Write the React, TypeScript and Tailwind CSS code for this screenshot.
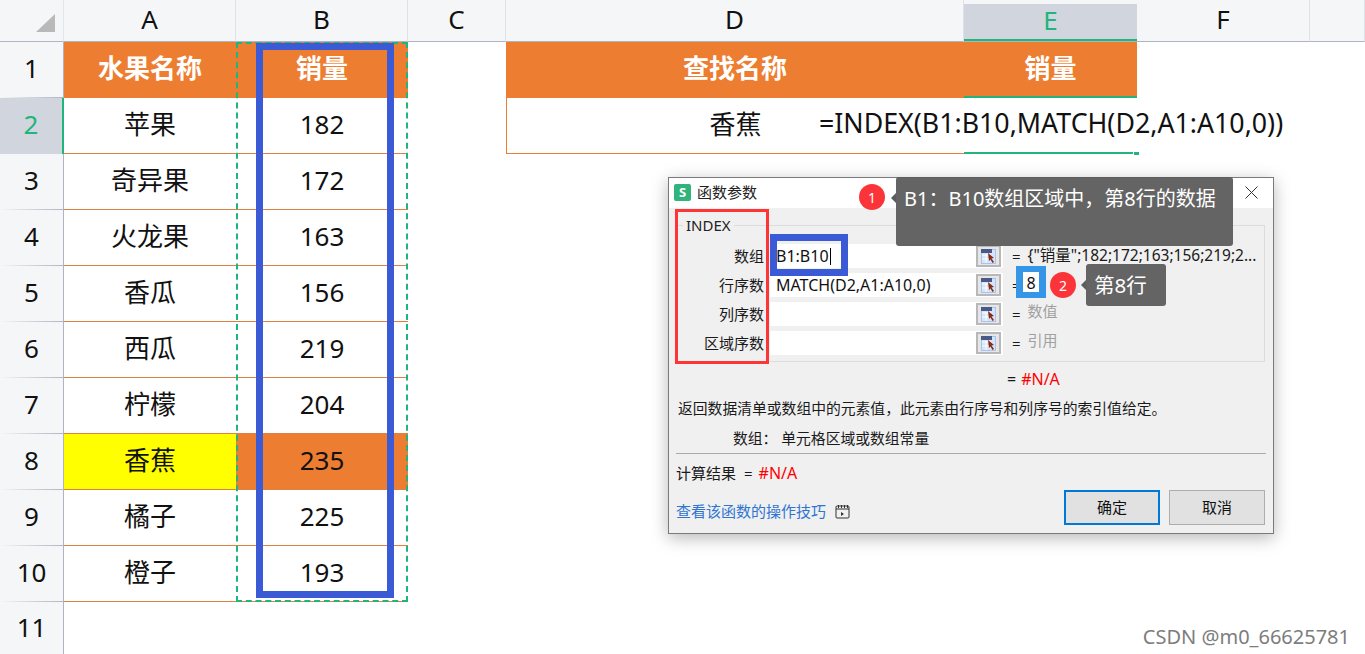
import type { ReactNode } from "react";

const fontStack = '"Noto Sans", "Noto Sans CJK SC", sans-serif';
const columns = ["A", "B", "C", "D", "E", "F", ""];

const fruits: [string, string][] = [
  ["苹果", "182"],
  ["奇异果", "172"],
  ["火龙果", "163"],
  ["香瓜", "156"],
  ["西瓜", "219"],
  ["柠檬", "204"],
  ["香蕉", "235"],
  ["橘子", "225"],
  ["橙子", "193"],
];

function RangeIcon() {
  return (
    <div className="flex h-[22px] w-[25px] shrink-0 items-center justify-center border-2 border-[#b8b8b8] bg-[#e6e6e6]">
      <svg width="15" height="15" viewBox="0 0 15 15">
        <rect x="0.5" y="0.5" width="14" height="14" fill="#d4e4fa" stroke="#a8c4ee" />
        <rect x="0" y="0" width="11" height="4" fill="#4a5a88" />
        <path d="M1 6h9M1 10h9M5 5v9" stroke="#fff" />
        <path d="M7 4l6 5-2.500.5L13 13l-1.500 1-2-3.500L8 12z" fill="#8a2a12" />
      </svg>
    </div>
  );
}

function ArgRow({ label, value, result }: { label: string; value?: ReactNode; result: ReactNode }) {
  return (
    <div className="flex h-[29px] items-start">
      <div className="h-[24px] w-[92px] shrink-0 pr-[6px] text-right text-[15px] leading-[24px] text-[#1a1a1a]">{label}</div>
      <div className="flex h-[24px] w-[233px] shrink-0 items-center justify-between bg-white pr-[2px] pl-[6px] text-[16px] whitespace-nowrap text-[#111]">
        <span className="flex items-center">{value}</span>
        <RangeIcon />
      </div>
      <div className="flex h-[24px] items-center gap-[7px] pl-[9px] text-[15px] whitespace-nowrap text-[#1a1a1a]">
        <span>=</span>
        {result}
      </div>
    </div>
  );
}

function Bubble({ n }: { n: number }) {
  return (
    <div className="flex h-[26px] w-[26px] items-center justify-center rounded-full bg-[#fb3439] text-[14px] text-white">{n}</div>
  );
}

function FunctionDialog() {
  return (
    <div className="absolute top-[177px] left-[668px] h-[357px] w-[606px] border border-[#7a7a7a] bg-[#f0f0f0] shadow-[0_4px_16px_rgba(0,0,0,0.28)]">
      <div className="flex h-[30px] items-center justify-between bg-white pr-[14px] pb-[2px] pl-[5px]">
        <div className="flex items-center gap-[6px]">
          <div className="flex h-[17px] w-[17px] items-center justify-center rounded-[2px] bg-[#2fb57c] text-[13px] leading-none font-bold text-white">S</div>
          <span className="text-[15px] text-[#222]">函数参数</span>
        </div>
        <svg width="15" height="15" viewBox="0 0 15 15">
          <path d="M1.500 1.500l12 12M13.500 1.500l-12 12" stroke="#333" strokeWidth="1" />
        </svg>
      </div>

      <div className="relative mx-[8px] mt-[17px] h-[137px] border border-[#dcdcdc] pt-[18px]">
        <div className="absolute -top-[10px] left-[5px] bg-[#f0f0f0] px-[3px] text-[15px] leading-[18px] text-[#222]">INDEX</div>
        <ArgRow
          label="数组"
          value={
            <>
              B1:B10
              <span className="ml-[1px] inline-block h-[17px] w-[1px] bg-black" />
            </>
          }
          result={<span className="text-[15.500px]">{'{"销量";182;172;163;156;219;2...'}</span>}
        />
        <ArgRow label="行序数" value="MATCH(D2,A1:A10,0)" result={<span className="w-[30px]" />} />
        <ArgRow label="列序数" result={<span className="-mt-[5px] text-[#a0a0a0]">数值</span>} />
        <ArgRow label="区域序数" result={<span className="-mt-[5px] text-[#a0a0a0]">引用</span>} />
      </div>

      <div className="mt-[6px] flex h-[22px] items-center gap-[5px] pl-[338px] text-[16px] text-[#1a1a1a]">
        <span>=</span>
        <span className="text-[#ff0000]">#N/A</span>
      </div>
      <div className="mt-[6px] pl-[9px] text-[14.800px] leading-[24px] whitespace-nowrap text-[#1a1a1a]">返回数据清单或数组中的元素值，此元素由行序号和列序号的索引值给定。</div>
      <div className="mt-[6px] pl-[64px] text-[14.800px] leading-[24px] text-[#1a1a1a]">数组： 单元格区域或数组常量</div>
      <div className="mx-[7px] mt-[3px] h-[1px] bg-[#ababab]" />
      <div className="mt-[7px] flex items-center gap-[8px] pl-[7px] text-[15px] leading-[24px] text-[#1a1a1a]">
        <span>计算结果</span>
        <span>=</span>
        <span className="-ml-[2px] text-[16px] text-[#ff0000]">#N/A</span>
      </div>
      <div className="mt-[5px] flex items-start justify-between pr-[8px] pl-[7px]">
        <div className="mt-[9px] flex items-center gap-[9px]">
          <span className="text-[15px] leading-[24px] text-[#2f74d0]">查看该函数的操作技巧</span>
          <svg width="15" height="15" viewBox="0 0 15 15" fill="none" stroke="#333">
            <rect x="1" y="2" width="13" height="12" rx="1" />
            <path d="M1 5h13M3.500 1v3M6.500 1v3M9.500 1v3M12.500 1v3" />
            <path d="M6 8l3 2-3 2z" fill="#333" stroke="none" />
          </svg>
        </div>
        <div className="flex gap-[9px]">
          <div className="flex h-[35px] w-[96px] items-center justify-center border-2 border-[#0078d7] bg-[#e1e1e1] text-[15px] text-[#111]">确定</div>
          <div className="flex h-[35px] w-[96px] items-center justify-center border border-[#adadad] bg-[#e1e1e1] text-[15px] text-[#111]">取消</div>
        </div>
      </div>
    </div>
  );
}

export default function App() {
  return (
    <div className="relative h-[654px] w-[1365px] overflow-hidden bg-white" style={{ fontFamily: fontStack }}>
      <div className="grid h-full grid-cols-[64px_172px_172px_98px_458px_173px_173px_1fr] grid-rows-[42px_repeat(10,56px)_1fr] text-[26px] leading-none text-[#111]">
        {/* column headers */}
        <div className="relative border-r border-b border-r-[#e2e5ea] border-b-[#aeb4c2] bg-[#f5f6f8]">
          <div className="absolute top-[14px] left-[36px] h-[18px] w-[19px] bg-[#b9b9b9] [clip-path:polygon(100%_0,100%_100%,0_100%)]" />
        </div>
        {columns.map((c) =>
          c === "E" ? (
            <div key={c} className="border-b border-[#aeb4c2] bg-[#f5f6f8] pt-[4px]">
              <div className="flex h-[37px] items-center justify-center border-b-2 border-[#1fb57c] bg-[#d1d5dd] pb-[3px] text-[#1fb57c]">E</div>
            </div>
          ) : (
            <div key={c} className="flex items-center justify-center border-r border-b border-r-[#dfe2e8] border-b-[#aeb4c2] bg-[#f5f6f8] pb-[3px]">
              {c}
            </div>
          ),
        )}

        {/* row 1 */}
        <RowHead n={1} />
        <div className="flex items-center justify-center bg-[#ed7d31] pb-[4px] font-bold text-white">水果名称</div>
        <div className="flex items-center justify-center bg-[#ed7d31] pb-[4px] font-bold text-white">销量</div>
        <div />
        <div className="flex items-center justify-center bg-[#ed7d31] pb-[4px] font-bold text-white">查找名称</div>
        <div className="flex items-center justify-center border-b-2 border-[#1fb57c] bg-[#ed7d31] pb-[2px] font-bold text-white">销量</div>
        <div />
        <div />

        {/* row 2 */}
        <RowHead n={2} active />
        <Cell>苹果</Cell>
        <Cell>182</Cell>
        <div />
        <div className="flex items-center justify-center border-b border-l border-[#ed7d31] pb-[4px] whitespace-nowrap">香蕉</div>
        <div className="mr-[4px] border-b-2 border-[#1fb57c]" />
        <div />
        <div />

        {/* remaining data rows */}
        {fruits.slice(1).map(([name, sales], i) => {
          const hit = name === "香蕉";
          return (
            <div key={name} className="contents">
              <RowHead n={i + 3} />
              <Cell className={hit ? "bg-[#ffff00]" : ""}>{name}</Cell>
              <Cell className={hit ? "bg-[#ed7d31]" : ""}>{sales}</Cell>
              <div className="col-span-5" />
            </div>
          );
        })}

        <RowHead n={11} plain />
        <div className="col-span-7" />
      </div>

      {/* formula spills over from E2 */}
      <div className="absolute top-[98px] left-[819px] flex h-[55px] items-center pb-[4px] text-[26.750px] leading-none whitespace-nowrap text-[#111]">
        =INDEX(B1:B10,MATCH(D2,A1:A10,0))
      </div>
      <div className="absolute top-[152px] left-[1134px] h-[3px] w-[5px] bg-[#1fb57c]" />

      {/* copy marquee + annotation frame on column B */}
      <div className="absolute top-[42px] left-[236px] h-[560px] w-[172px] border-2 border-dashed border-[#1fb57c]" />
      <div className="absolute top-[43px] left-[256px] h-[555px] w-[138px] border-[7px] border-[#3a5bd5]" />

      <FunctionDialog />

      {/* annotations over the dialog */}
      <div className="absolute top-[209px] left-[675px] h-[155px] w-[94px] border-[3px] border-[#ff3535]" />
      <div className="absolute top-[234px] left-[770px] h-[42px] w-[78px] border-[7px] border-[#3a5bd5]" />
      <div className="absolute top-[266px] left-[1016px] flex h-[32px] w-[30px] items-center justify-center border-x-[7px] border-y-[6px] border-[#3596e8] bg-white pt-[2px] text-[16px] leading-none text-[#111]">8</div>
      <div className="absolute top-[184px] left-[859px]"><Bubble n={1} /></div>
      <div className="absolute top-[272px] left-[1050px]"><Bubble n={2} /></div>
      <Tip className="top-[177px] left-[896px] h-[69px] w-[337px] items-start pt-[7px] pl-[8px] text-[20px]" arrowTop="top-[16px]">
        B1：B10数组区域中，第8行的数据
      </Tip>
      <Tip className="top-[264px] left-[1086px] h-[42px] w-[80px] items-center pl-[8px] text-[20.500px]" arrowTop="top-[16px]">
        第8行
      </Tip>

      <div className="absolute right-[15px] bottom-[7px] text-[20px] leading-none text-[#7d7d7d]">CSDN @m0_66625781</div>
    </div>
  );
}

function RowHead({ n, active, plain }: { n: number; active?: boolean; plain?: boolean }) {
  if (active) {
    return (
      <div className="flex items-center justify-center border-r-2 border-[#1fb57c] bg-[#d1d5dd] pb-[4px] text-[#1fb57c]">{n}</div>
    );
  }
  return (
    <div className={`relative flex items-center justify-center border-r border-[#aeb4c2] bg-[#f5f6f8] ${plain ? "pb-[2px]" : "pb-[4px]"}`}>
      {n}
      {!plain && <div className="absolute right-0 bottom-0 left-0 h-[1px] bg-gradient-to-r from-[#f5f6f8] to-[#aeb4c2]" />}
    </div>
  );
}

function Cell({ children, className = "" }: { children: ReactNode; className?: string }) {
  return (
    <div className={`flex items-center justify-center border-b border-[#e27f45] pb-[4px] ${className}`}>{children}</div>
  );
}

function Tip({ children, className, arrowTop }: { children: ReactNode; className: string; arrowTop: string }) {
  return (
    <div className={`absolute flex rounded-[3px] bg-[#5c5c5c]/95 whitespace-nowrap text-white ${className}`}>
      <div className={`absolute -left-[5px] h-0 w-0 border-y-[5px] border-r-[5px] border-y-transparent border-r-[#5c5c5c] ${arrowTop}`} />
      {children}
    </div>
  );
}
